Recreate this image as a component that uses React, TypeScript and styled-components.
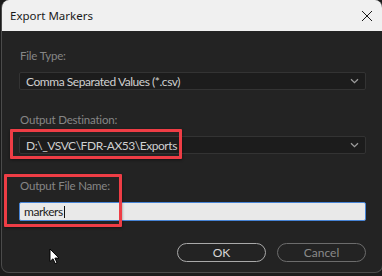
import React from "react";
import styled, { createGlobalStyle } from "styled-components";

const GlobalStyle = createGlobalStyle`
  html, body {
    margin: 0;
    padding: 0;
    background: #1b1b1b;
  }
`;

const Screen = styled.div`
  width: 382px;
  height: 276px;
  position: relative;
  overflow: hidden;
  background: #1b1b1b;
`;

const Window = styled.div`
  width: 380px;
  height: 272px;
  margin-left: 1px;
  border: 1px solid #4b4b4b;
  border-top: none;
  border-radius: 8px;
  overflow: hidden;
  display: flex;
  flex-direction: column;
  background: #232323;
`;

const TitleBar = styled.div`
  height: 31px;
  flex: none;
  background: #f0f0f0;
  display: flex;
  align-items: center;
  justify-content: space-between;
  padding: 0 9px 0 8px;
  font-family: "Noto Sans", "Open Sans", sans-serif;
  font-size: 11.5px;
  color: #1a1a1a;
`;

const Body = styled.div`
  flex: 1;
  padding: 17px 16px 0 17px;
  display: flex;
  flex-direction: column;
  font-family: "Lato", "Liberation Sans", sans-serif;
  letter-spacing: -0.45px;
`;

const Field = styled.div<{ $gap: number }>`
  display: flex;
  flex-direction: column;
  margin-bottom: ${(p) => p.$gap}px;
`;

const Label = styled.div`
  height: 16px;
  line-height: 16px;
  margin: 0 0 8px 1px;
  font-size: 11.5px;
  letter-spacing: -0.2px;
  color: #868686;
`;

const Select = styled.div`
  height: 18px;
  box-sizing: border-box;
  border: 1px solid #333333;
  border-radius: 2px;
  background: #1c1c1c;
  display: flex;
  align-items: center;
  justify-content: space-between;
  padding: 0 6px 0 6px;
  font-size: 12px;
  color: #d0d0d0;
`;

const Input = styled.div`
  height: 19px;
  box-sizing: border-box;
  border: 1px solid #4784d6;
  border-radius: 2px;
  background: #e9e9e9;
  display: flex;
  align-items: center;
  padding: 0 4px;
  font-size: 12px;
  color: #1c1c1c;
`;

const Caret = styled.span`
  display: inline-block;
  width: 1px;
  height: 12px;
  background: #111;
  margin-left: 1px;
`;

const Buttons = styled.div`
  display: flex;
  justify-content: flex-end;
  gap: 11px;
  margin-top: 22px;
`;

const Button = styled.div<{ $primary?: boolean }>`
  width: 89px;
  height: 19px;
  box-sizing: border-box;
  border: 1px solid ${(p) => (p.$primary ? "#a9a9a9" : "#6c6c6c")};
  border-radius: 10px;
  display: flex;
  align-items: center;
  justify-content: center;
  font-size: 12px;
  letter-spacing: 0;
  color: ${(p) => (p.$primary ? "#d6d6d6" : "#8a8a8a")};
`;

const Highlight = styled.div<{ $x: number; $y: number; $w: number; $h: number }>`
  position: absolute;
  left: ${(p) => p.$x}px;
  top: ${(p) => p.$y}px;
  width: ${(p) => p.$w}px;
  height: ${(p) => p.$h}px;
  box-sizing: border-box;
  border: 3px solid #ee3d45;
  border-radius: 1px;
  box-shadow: 0 1px 3px rgba(0, 0, 0, 0.45);
`;

const Pointer = styled.svg`
  position: absolute;
  left: 49px;
  top: 248px;
`;

const Chevron = () => (
  <svg width="9" height="6" viewBox="0 0 9 6">
    <path d="M1 1.2 L4.5 4.6 L8 1.2" fill="none" stroke="#9c9c9c" strokeWidth="1.3" />
  </svg>
);

const CloseIcon = () => (
  <svg width="12" height="12" viewBox="0 0 12 12">
    <path d="M1 1 L11 11 M11 1 L1 11" stroke="#1a1a1a" strokeWidth="1" />
  </svg>
);

export default function App() {
  return (
    <Screen>
      <GlobalStyle />
      <Window>
        <TitleBar>
          <span>Export Markers</span>
          <CloseIcon />
        </TitleBar>
        <Body>
          <Field $gap={22}>
            <Label>File Type:</Label>
            <Select>
              <span>Comma Separated Values (*.csv)</span>
              <Chevron />
            </Select>
          </Field>
          <Field $gap={24}>
            <Label>Output Destination:</Label>
            <Select>
              <span>D:\_VSVC\FDR-AX53\Exports</span>
              <Chevron />
            </Select>
          </Field>
          <Field $gap={0}>
            <Label>Output File Name:</Label>
            <Input>
              markers
              <Caret />
            </Input>
          </Field>
          <Buttons>
            <Button $primary>OK</Button>
            <Button>Cancel</Button>
          </Buttons>
        </Body>
      </Window>
      <Highlight $x={10} $y={129} $w={172} $h={30} />
      <Highlight $x={4} $y={174} $w={118} $h={53} />
      <Pointer width="12" height="17" viewBox="0 0 12 17">
        <path d="M1 1 L1 13.5 L4 10.8 L6.2 15.6 L8 14.8 L5.9 10.1 L10 10.1 Z" fill="#ffffff" stroke="#000" strokeWidth="1" strokeLinejoin="round" />
      </Pointer>
    </Screen>
  );
}
